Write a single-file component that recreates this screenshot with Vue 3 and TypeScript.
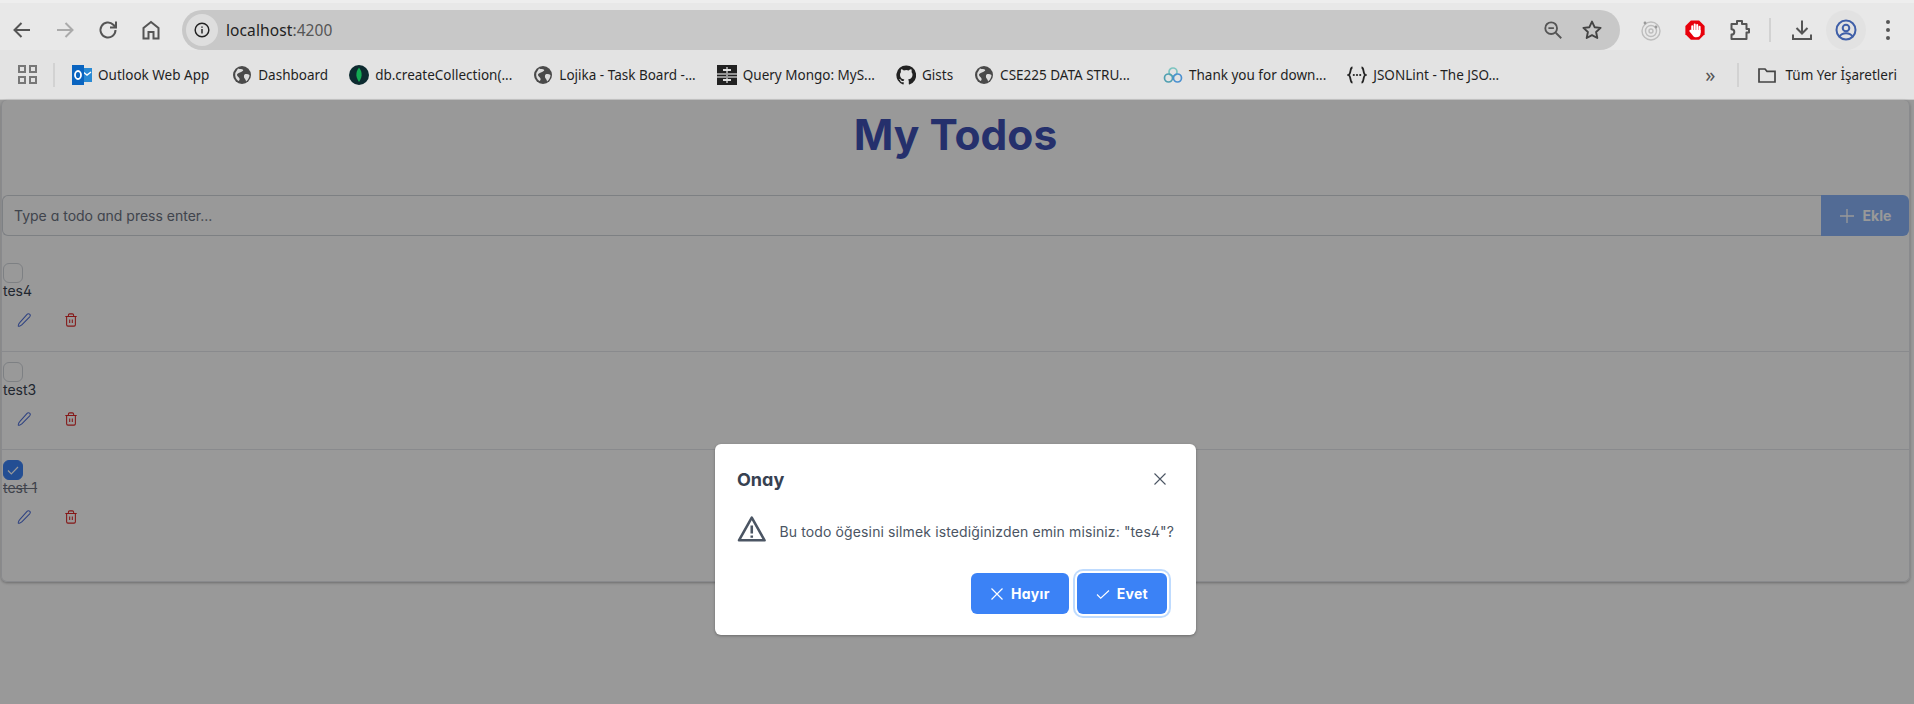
<template>
  <div class="screen">
    <!-- browser chrome -->
    <header class="toolbar">
      <div class="nav">
        <button v-for="n in navIcons" :key="n.key" class="tb-btn" :class="n.key">
          <svg viewBox="0 0 24 24" width="24" height="24" fill="none" stroke="currentColor" stroke-width="2">
            <path :d="n.d" />
          </svg>
        </button>
      </div>
      <div class="omnibox">
        <span class="site-info">
          <svg viewBox="0 0 20 20" width="18" height="18" fill="none" stroke="#222" stroke-width="1.6">
            <circle cx="10" cy="10" r="7.6" />
            <path d="M10 9v5M10 6v1.6" />
          </svg>
        </span>
        <span class="url">localhost<span class="port">:4200</span></span>
        <span class="omni-right">
          <svg viewBox="0 0 24 24" width="22" height="22" fill="none" stroke="#555" stroke-width="2">
            <circle cx="10" cy="10" r="6.4" />
            <path d="M7 10h6M15 15l6 6" />
          </svg>
          <svg viewBox="0 0 24 24" width="24" height="24" fill="none" stroke="#444" stroke-width="1.9" stroke-linejoin="round">
            <path d="M12 3.6l2.6 5.6 6 .7-4.5 4.1 1.2 6L12 17.1l-5.3 2.9 1.2-6-4.5-4.1 6-.7z" />
          </svg>
        </span>
      </div>
      <div class="ext">
        <span class="ext-item">
          <svg viewBox="0 0 24 24" width="24" height="24" fill="none" stroke="#bdbdbd" stroke-width="1.4">
            <circle cx="12" cy="13" r="9" />
            <circle cx="12" cy="13" r="5.5" />
            <circle cx="12" cy="13" r="2" />
            <circle cx="6" cy="5" r="1.4" fill="#999" stroke="none" />
            <circle cx="17" cy="9" r="1.4" fill="#999" stroke="none" />
          </svg>
        </span>
        <span class="ext-item">
          <svg viewBox="0 0 24 24" width="22" height="22">
            <path d="M7.5 1.5h9l6 6v9l-6 6h-9l-6-6v-9z" fill="#e8000b" />
            <g fill="none" stroke="#fff" stroke-width="2.2" stroke-linecap="round">
              <path d="M9 8v6M11.700 6v7M14.400 6.500v7M17 8.500v6" />
            </g>
            <path d="M7.900 12h10.200v3.500c0 2.600-1.800 4.500-4.600 4.500-2.200 0-3.400-1-4.300-2.600L6 13.500c-.7-1.300 1-2.300 1.900-1.500z" fill="#fff" />
          </svg>
        </span>
        <span class="ext-item">
          <svg viewBox="0 0 24 24" width="24" height="24" fill="none" stroke="#555" stroke-width="2" stroke-linejoin="round">
            <path d="M4.500 6H10V3h5v3h4.500v5H22v3.500h-2.500V21H4.500v-4.500c1.700 0 2.800-1.100 2.800-2.600S6.200 11.300 4.500 11.300z" />
          </svg>
        </span>
        <span class="sep tall"></span>
        <span class="ext-item">
          <svg viewBox="0 0 24 24" width="24" height="24" fill="none" stroke="#555" stroke-width="2">
            <path d="M12 2.500V15M6.500 10l5.500 5.500 5.500-5.500M3 16.500V21h18v-4.500" />
          </svg>
        </span>
        <span class="ext-item profile">
          <svg viewBox="0 0 24 24" width="24" height="24" fill="none" stroke="#3f5fa8" stroke-width="2">
            <circle cx="12" cy="12" r="9.500" />
            <circle cx="12" cy="10" r="3.300" />
            <path d="M5.500 18.500c1.500-2.500 4-3.300 6.500-3.300s5 .8 6.500 3.300" />
          </svg>
        </span>
        <span class="ext-item kebab"><i></i><i></i><i></i></span>
      </div>
    </header>

    <nav class="bookmarks">
      <span class="apps"><i></i><i></i><i></i><i></i></span>
      <span class="sep"></span>
      <a v-for="b in bookmarks" :key="b.label" class="bm" :class="'bm-' + b.icon">
        <svg viewBox="0 0 20 20" width="20" height="20" v-html="iconSvg[b.icon]"></svg>
        <span>{{ b.label }}</span>
      </a>
      <span class="bm-spacer"></span>
      <span class="more">»</span>
      <span class="sep"></span>
      <a class="bm all">
        <svg viewBox="0 0 20 20" width="20" height="20" fill="none" stroke="#444" stroke-width="1.700">
          <path d="M2 4h6l2 2.300h8V17H2z" />
        </svg>
        <span>Tüm Yer İşaretleri</span>
      </a>
    </nav>

    <!-- app page -->
    <main class="page">
      <section class="card">
        <h1>My Todos</h1>
        <div class="add-row">
          <input class="add-input" placeholder="Type a todo and press enter..." />
          <button class="add-btn" disabled>
            <svg viewBox="0 0 16 16" width="16" height="16" fill="none" stroke="currentColor" stroke-width="1.300"><path d="M8 1v14M1 8h14" /></svg>
            Ekle
          </button>
        </div>
        <ul class="list">
          <li v-for="t in todos" :key="t.text" class="todo">
            <span class="check" :class="{ on: t.done }">
              <svg v-if="t.done" viewBox="0 0 14 14" width="14" height="14" fill="none" stroke="#fff" stroke-width="1.200"><path d="M2 7.500l3.300 3.300L12 4" /></svg>
            </span>
            <div class="todo-text" :class="{ done: t.done }">{{ t.text }}</div>
            <div class="actions">
              <button class="icon-btn edit">
                <svg viewBox="0 0 16 16" width="14" height="14" fill="none" stroke="currentColor" stroke-width="1.200" stroke-linejoin="round">
                  <path d="M11.500 1.500a2 2 0 0 1 3 2.800L5.500 13.500c-.8.800-3.700 2-4 1.500s.8-3.300 1.600-4.100z" />
                </svg>
              </button>
              <button class="icon-btn del">
                <svg viewBox="0 0 16 16" width="14" height="14" fill="none" stroke="currentColor" stroke-width="1.200">
                  <path d="M1.500 4h13M3 4v9.500A1.500 1.500 0 0 0 4.500 15h7a1.500 1.500 0 0 0 1.500-1.500V4M5 4V2.500A1.500 1.500 0 0 1 6.500 1h3A1.500 1.500 0 0 1 11 2.500V4M6.500 7.500v4M9.500 7.500v4" />
                </svg>
              </button>
            </div>
          </li>
        </ul>
      </section>

      <div class="mask">
        <div class="dialog" role="dialog">
          <div class="dlg-head">
            <span class="dlg-title">Onay</span>
            <svg class="dlg-close" viewBox="0 0 14 14" width="14" height="14" fill="none" stroke="#4b5563" stroke-width="1.100"><path d="M1.500 1.500l11 11M12.500 1.500l-11 11" /></svg>
          </div>
          <div class="dlg-body">
            <svg viewBox="0 0 30 28" width="30" height="28" fill="none" stroke="#4b5563" stroke-width="2.600" stroke-linejoin="round">
              <path d="M15 2.500L28 25.500H2z" />
              <path d="M15 10.500v8M15 20.500v2.500" />
            </svg>
            <span class="dlg-msg">Bu todo öğesini silmek istediğinizden emin misiniz: "tes4"?</span>
          </div>
          <div class="dlg-foot">
            <button class="btn">
              <svg viewBox="0 0 14 14" width="14" height="14" fill="none" stroke="currentColor" stroke-width="1.200"><path d="M1.500 1.500l11 11M12.500 1.500l-11 11" /></svg>
              Hayır
            </button>
            <button class="btn focus">
              <svg viewBox="0 0 14 14" width="14" height="14" fill="none" stroke="currentColor" stroke-width="1.100"><path d="M1 7.500l3.700 3.700L13 3.500" /></svg>
              Evet
            </button>
          </div>
        </div>
      </div>
    </main>
  </div>
</template>

<script setup lang="ts">
const navIcons = [
  { key: 'back', d: 'M20 12H5M11.500 5L4.500 12l7 7' },
  { key: 'fwd', d: 'M4 12h15M12.500 5l7 7-7 7' },
  { key: 'reload', d: 'M19.500 12a7.500 7.500 0 1 1-2.200-5.300L20 9.300M20 3.500v6h-6' },
  { key: 'home', d: 'M4.500 20.500V10L12 4l7.500 6v10.500H14.500V14h-5v6.500z' },
]

const globe = '<circle cx="10" cy="10" r="9" fill="#4a4a4a"/><path d="M6 3.500c2 .8 4 .2 5 1.300S9 7 8 7.500 5.500 8 5 9.500 7 12 7.500 13.500 7 16 6.300 16C4 14.500 2.700 11.500 3.300 8zM12.500 9.500c1.800-.8 3.600-.3 5 .5 0 2.600-1.300 4.800-3.500 6.500 0-1.500-.8-2.500-1.500-3.300s-.8-2.900 0-3.700z" fill="#ddd"/>'

const iconSvg: Record<string, string> = {
  globe,
  outlook: '<rect x="8" y="3" width="12" height="14" fill="#2a8ad4"/><path d="M11 7l4 3 4-3" fill="none" stroke="#fff" stroke-width="1.500"/><rect x="0" y="0" width="12" height="20" fill="#0a64c0"/><ellipse cx="6" cy="10" rx="3" ry="4" fill="none" stroke="#fff" stroke-width="1.800"/>',
  mongo: '<circle cx="10" cy="10" r="10" fill="#0c2a2f"/><path d="M10 2.500c2 2.500 2.800 5 2.600 8-.2 2.300-1.300 4.300-2.600 6.500-1.300-2.200-2.400-4.200-2.600-6.500-.2-3 .6-5.500 2.600-8z" fill="#13aa52"/>',
  query: '<rect width="20" height="20" fill="#222"/><path d="M0 9h20M0 12h20" stroke="#bbb" stroke-width="1.500"/><path d="M10 2v16" stroke="#999" stroke-width="2"/><rect x="6" y="4" width="8" height="2" fill="#ddd"/><rect x="6" y="14" width="8" height="2" fill="#ddd"/>',
  github: '<path d="M10 .5a9.700 9.700 0 0 0-3 18.900c.5.100.7-.2.700-.5v-1.700c-2.700.6-3.300-1.300-3.300-1.300-.4-1.100-1.100-1.400-1.100-1.400-.9-.6.100-.6.100-.6 1 .1 1.500 1 1.500 1 .9 1.500 2.300 1.100 2.900.8.100-.6.300-1.100.6-1.300-2.200-.2-4.400-1.100-4.400-4.800 0-1.100.4-1.900 1-2.600-.1-.2-.4-1.200.1-2.600 0 0 .8-.3 2.700 1a9 9 0 0 1 4.900 0c1.900-1.300 2.700-1 2.700-1 .5 1.400.2 2.400.1 2.600.6.700 1 1.500 1 2.600 0 3.700-2.300 4.600-4.400 4.800.3.300.7.900.7 1.800v2.700c0 .3.200.6.700.5A9.700 9.700 0 0 0 10 .5z" fill="#222"/>',
  thanks: '<g fill="none" stroke-width="1.700"><circle cx="10" cy="7" r="4" stroke="#7cc4c0"/><circle cx="5.500" cy="13" r="4" stroke="#4f9fb0"/><circle cx="14.500" cy="13" r="4" stroke="#4a90d0"/></g>',
  json: '<path d="M5.500 2.500C2.500 2.500 4.500 9 1.500 10c3 1 1 7.500 4 7.500M14.500 2.500c3 0 1 6.500 4 7.500-3 1-1 7.500-4 7.500" fill="none" stroke="#222" stroke-width="1.800"/><circle cx="6.800" cy="10" r="1.100" fill="#222"/><circle cx="10" cy="10" r="1.100" fill="#222"/><circle cx="13.200" cy="10" r="1.100" fill="#222"/>',
}

const bookmarks = [
  { icon: 'outlook', label: 'Outlook Web App' },
  { icon: 'globe', label: 'Dashboard' },
  { icon: 'mongo', label: 'db.createCollection(...' },
  { icon: 'globe', label: 'Lojika - Task Board -...' },
  { icon: 'query', label: 'Query Mongo: MyS...' },
  { icon: 'github', label: 'Gists' },
  { icon: 'globe', label: 'CSE225 DATA STRU...' },
  { icon: 'thanks', label: 'Thank you for down...' },
  { icon: 'json', label: 'JSONLint - The JSO...' },
]

const todos = [
  { text: 'tes4', done: false },
  { text: 'test3', done: false },
  { text: 'test 1', done: true },
]
</script>

<style>
html, body { margin: 0; background: #fff; }
</style>

<style scoped>
.screen {
  width: 1914px;
  height: 704px;
  display: flex;
  flex-direction: column;
  overflow: hidden;
  font-family: Inter, "Noto Sans", sans-serif;
  font-feature-settings: "cv02", "cv03", "cv04", "cv11";
}

/* browser chrome */
.toolbar {
  height: 50px;
  box-sizing: border-box;
  display: flex;
  align-items: flex-start;
  background: #e8e8e8;
  border-top: 3px solid #eeeeee;
  padding-top: 7px;
}
.nav { display: flex; flex: none; width: 182px; box-sizing: border-box; padding-top: 8px; }
.tb-btn {
  width: 43px;
  height: 24px;
  padding: 0;
  border: 0;
  background: none;
  color: #555;
  display: flex;
  justify-content: center;
}
.tb-btn.fwd { color: #aaa; }
.omnibox {
  flex: none;
  width: 1438px;
  height: 40px;
  background: #c8c8c8;
  border-radius: 20px;
  display: flex;
  align-items: center;
  padding: 0 16px 0 4px;
  box-sizing: border-box;
}
.site-info {
  width: 32px;
  height: 32px;
  border-radius: 50%;
  background: #dedede;
  display: flex;
  align-items: center;
  justify-content: center;
  margin-right: 8px;
}
.url { font: 15.500px "Noto Sans", sans-serif; letter-spacing: 0.1px; color: #222; }
.port { color: #555; }
.omni-right { margin-left: auto; display: flex; gap: 16px; align-items: center; }
.ext { flex: 1; min-width: 0; display: flex; align-items: center; height: 40px; padding-left: 9px; }
.ext-item { width: 44px; height: 40px; display: flex; align-items: center; justify-content: center; flex: none; }
.profile { background: #e2e2e2; border-radius: 50%; width: 40px; margin: 0 2px; }
.kebab { width: 40px; flex-direction: column; gap: 4px; }
.kebab i { width: 4px; height: 4px; border-radius: 50%; background: #555; }
.sep { width: 2px; height: 24px; background: #d2d2d2; flex: none; }
.sep.tall { margin: 0 9px 0 8px; }

.bookmarks {
  height: 50px;
  box-sizing: border-box;
  display: flex;
  align-items: center;
  background: #e3e3e3;
  border-bottom: 1px solid #c8c8c8;
  padding: 0 17px 0 18px;
  font: 13.500px "Noto Sans", sans-serif;
  color: #1f1f1f;
}
.apps { display: grid; grid-template-columns: 8px 8px; gap: 3px; margin-right: 16px; }
.apps i { width: 8px; height: 8px; border: 2px solid #777; box-sizing: border-box; }
.bookmarks > .sep { margin-right: 17px; }
.bm { display: flex; align-items: center; gap: 6px; margin-right: 21px; white-space: nowrap; }
.bm-outlook { margin-right: 23px; }
.bm-thanks { margin-left: 12px; }
.bm.all { margin: 0 0 0 1px; gap: 8px; }
.bm-spacer { flex: 1; }
.more { color: #555; font-size: 20px; margin-right: 22px; line-height: 1; }

/* todo app */
.page { position: relative; flex: 1; min-height: 0; background: #fff; padding: 0 4px 0 1px; }
.card {
  height: 482px;
  box-sizing: border-box;
  border: 1px solid #e5e7eb;
  border-top: 0;
  border-radius: 6px;
  box-shadow: 0 1px 3px rgba(0, 0, 0, 0.3);
}
h1 {
  margin: 0;
  padding-top: 9px;
  height: 95px;
  box-sizing: border-box;
  text-align: center;
  font-size: 42.500px;
  line-height: 52px;
  font-weight: 700;
  color: #3f51b5;
}
.add-row { display: flex; height: 41px; }
.add-input {
  flex: 1;
  min-width: 0;
  box-sizing: border-box;
  border: 1px solid #d1d5db;
  border-right: 0;
  border-radius: 6px 0 0 6px;
  padding: 0 11px;
  font: inherit;
  font-size: 14px;
  font-feature-settings: inherit;
  outline: none;
}
.add-input::placeholder { color: #6b7280; }
.add-btn {
  width: 88px;
  border: 0;
  border-radius: 0 6px 6px 0;
  background: #3b82f6;
  color: #fff;
  opacity: 0.6;
  display: flex;
  align-items: center;
  justify-content: center;
  gap: 8px;
  font: inherit;
  font-size: 14px;
  font-weight: 700;
  font-feature-settings: inherit;
}
.list { list-style: none; margin: 0; padding: 17px 0 0; }
.todo { height: 98.500px; box-sizing: border-box; border-bottom: 1px solid #e5e7eb; padding: 10px 0 0 1px; }
.todo:last-child { border-bottom: 0; }
.check {
  display: flex;
  width: 20px;
  height: 20px;
  box-sizing: border-box;
  border: 1px solid #d1d5db;
  border-radius: 6px;
  align-items: center;
  justify-content: center;
}
.check.on { background: #3b82f6; border-color: #3b82f6; }
.todo-text { font-size: 14px; line-height: 16px; color: #374151; }
.todo-text.done { color: #6b7280; text-decoration: line-through; }
.actions { display: flex; gap: 33px; padding: 14px 0 0 14px; }
.icon-btn { width: 14px; height: 14px; padding: 0; border: 0; background: none; display: block; }
.icon-btn svg { display: block; }
.edit { color: #4f6fd8; }
.del { color: #dc2626; }

/* confirm dialog */
.mask {
  position: absolute;
  inset: 0;
  background: rgba(0, 0, 0, 0.4);
  display: flex;
  justify-content: center;
  align-items: flex-end;
  padding: 0 3px 69px 0;
}
.dialog {
  width: 481px;
  height: 191px;
  box-sizing: border-box;
  background: #fff;
  border-radius: 6px;
  box-shadow: 0 1px 3px rgba(0, 0, 0, 0.3);
  padding: 21px 22px 21px;
  display: flex;
  flex-direction: column;
}
.dlg-head { display: flex; justify-content: space-between; align-items: center; height: 28px; padding-right: 7px; }
.dlg-title { font-size: 18px; font-weight: 700; color: #374151; }
.dlg-body { display: flex; align-items: center; gap: 13px; margin-top: 22px; font-size: 14px; letter-spacing: 0.12px; color: #4b5563; }
.dlg-msg { margin-top: 4px; white-space: nowrap; }
.dlg-foot { margin-top: auto; display: flex; justify-content: flex-end; gap: 8px; padding-right: 7px; }
.btn {
  height: 41px;
  padding: 0 19px;
  border: 0;
  border-radius: 6px;
  background: #3b82f6;
  color: #fff;
  display: flex;
  align-items: center;
  gap: 7px;
  font: inherit;
  font-size: 14px;
  font-weight: 700;
  letter-spacing: 0.3px;
  font-feature-settings: inherit;
}
.btn.focus { box-shadow: 0 0 0 2px #fff, 0 0 0 4px #bfdbfe; }
</style>
